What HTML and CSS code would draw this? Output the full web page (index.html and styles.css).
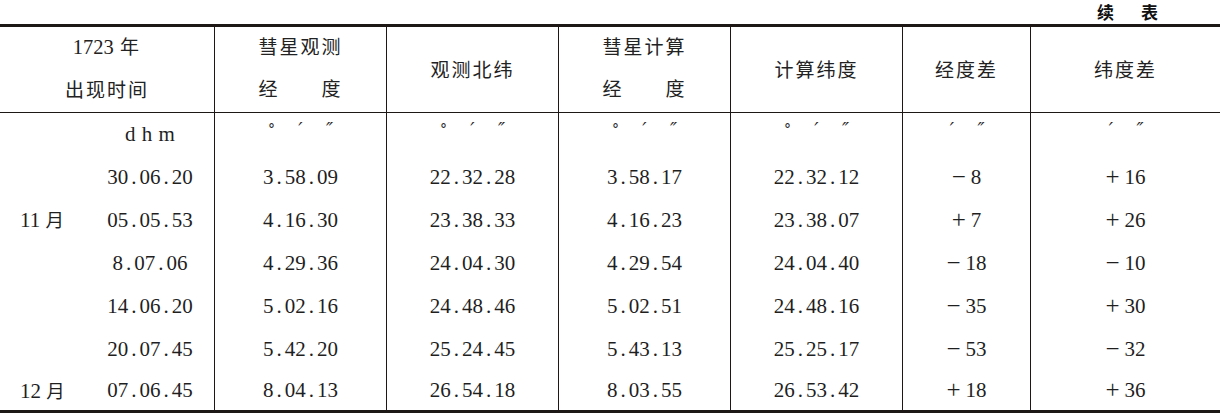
FILE: index.html
```html
<!DOCTYPE html>
<html lang="zh-CN">
<head>
<meta charset="utf-8">
<title>续表</title>
<link rel="stylesheet" href="styles.css">
</head>
<body>
<div class="page">
  <div class="cont"><span>续</span><span>表</span></div>
  <div class="grid">
    <div class="h"><div class="stack"><span><span class="n">1723</span> 年</span><span>出现时间</span></div></div>
    <div class="h"><div class="just"><span>彗星观测</span><span class="sp"><span>经</span><span>度</span></span></div></div>
    <div class="h"><span class="one">观测北纬</span></div>
    <div class="h"><div class="just"><span>彗星计算</span><span class="sp"><span>经</span><span>度</span></span></div></div>
    <div class="h"><span class="one">计算纬度</span></div>
    <div class="h"><span class="one">经度差</span></div>
    <div class="h"><span class="one">纬度差</span></div>

    <div class="c0 ur"><span class="mo"></span><span class="t dhm">d h m</span></div>
    <div class="c ur"><span class="u"><span class="deg">°</span><span>′</span><span>″</span></span></div>
    <div class="c ur"><span class="u"><span class="deg">°</span><span>′</span><span>″</span></span></div>
    <div class="c ur"><span class="u"><span class="deg">°</span><span>′</span><span>″</span></span></div>
    <div class="c ur"><span class="u"><span class="deg">°</span><span>′</span><span>″</span></span></div>
    <div class="c ur"><span class="u"><span>′</span><span>″</span></span></div>
    <div class="c ur"><span class="u"><span>′</span><span>″</span></span></div>

    <div class="c0"><span class="mo"></span><span class="t">30<span class="p">.</span>06<span class="p">.</span>20</span></div>
    <div class="c">3<span class="p">.</span>58<span class="p">.</span>09</div>
    <div class="c">22<span class="p">.</span>32<span class="p">.</span>28</div>
    <div class="c">3<span class="p">.</span>58<span class="p">.</span>17</div>
    <div class="c">22<span class="p">.</span>32<span class="p">.</span>12</div>
    <div class="c"><span class="sg">−</span>8</div>
    <div class="c"><span class="sg">+</span>16</div>

    <div class="c0"><span class="mo">11 <span class="cj">月</span></span><span class="t">05<span class="p">.</span>05<span class="p">.</span>53</span></div>
    <div class="c">4<span class="p">.</span>16<span class="p">.</span>30</div>
    <div class="c">23<span class="p">.</span>38<span class="p">.</span>33</div>
    <div class="c">4<span class="p">.</span>16<span class="p">.</span>23</div>
    <div class="c">23<span class="p">.</span>38<span class="p">.</span>07</div>
    <div class="c"><span class="sg">+</span>7</div>
    <div class="c"><span class="sg">+</span>26</div>

    <div class="c0"><span class="mo"></span><span class="t">8<span class="p">.</span>07<span class="p">.</span>06</span></div>
    <div class="c">4<span class="p">.</span>29<span class="p">.</span>36</div>
    <div class="c">24<span class="p">.</span>04<span class="p">.</span>30</div>
    <div class="c">4<span class="p">.</span>29<span class="p">.</span>54</div>
    <div class="c">24<span class="p">.</span>04<span class="p">.</span>40</div>
    <div class="c"><span class="sg">−</span>18</div>
    <div class="c"><span class="sg">−</span>10</div>

    <div class="c0"><span class="mo"></span><span class="t">14<span class="p">.</span>06<span class="p">.</span>20</span></div>
    <div class="c">5<span class="p">.</span>02<span class="p">.</span>16</div>
    <div class="c">24<span class="p">.</span>48<span class="p">.</span>46</div>
    <div class="c">5<span class="p">.</span>02<span class="p">.</span>51</div>
    <div class="c">24<span class="p">.</span>48<span class="p">.</span>16</div>
    <div class="c"><span class="sg">−</span>35</div>
    <div class="c"><span class="sg">+</span>30</div>

    <div class="c0"><span class="mo"></span><span class="t">20<span class="p">.</span>07<span class="p">.</span>45</span></div>
    <div class="c">5<span class="p">.</span>42<span class="p">.</span>20</div>
    <div class="c">25<span class="p">.</span>24<span class="p">.</span>45</div>
    <div class="c">5<span class="p">.</span>43<span class="p">.</span>13</div>
    <div class="c">25<span class="p">.</span>25<span class="p">.</span>17</div>
    <div class="c"><span class="sg">−</span>53</div>
    <div class="c"><span class="sg">−</span>32</div>

    <div class="c0"><span class="mo">12 <span class="cj">月</span></span><span class="t">07<span class="p">.</span>06<span class="p">.</span>45</span></div>
    <div class="c">8<span class="p">.</span>04<span class="p">.</span>13</div>
    <div class="c">26<span class="p">.</span>54<span class="p">.</span>18</div>
    <div class="c">8<span class="p">.</span>03<span class="p">.</span>55</div>
    <div class="c">26<span class="p">.</span>53<span class="p">.</span>42</div>
    <div class="c"><span class="sg">+</span>18</div>
    <div class="c"><span class="sg">+</span>36</div>
  </div>
</div>
</body>
</html>
```
FILE: styles.css
```css
html, body {
  margin: 0;
  padding: 0;
  background: #ffffff;
}

.page {
  width: 1220px;
  color: #1f1f1f;
  font-family: "Liberation Serif", "Noto Sans CJK SC", serif;
}

.cont {
  height: 24px;
  display: flex;
  justify-content: flex-end;
  align-items: flex-start;
  gap: 27px;
  padding-right: 62px;
  font-family: "Noto Sans CJK SC", sans-serif;
  font-weight: 700;
  font-size: 17px;
  line-height: 24px;
  color: #111;
}

.grid {
  display: grid;
  grid-template-columns: 214px 172px 172px 172px 172px 128px 190px;
  grid-template-rows: 86px 42px repeat(5, 43px) 40px;
  border-top: 3px solid #1d1816;
  border-bottom: 3px solid #1d1816;
  font-size: 21px;
}

.grid > * {
  box-sizing: border-box;
  min-width: 0;
}

.grid > :not(:nth-child(7n+1)) {
  border-left: 1px solid #1d1816;
}

.grid > :nth-child(-n+7) {
  border-bottom: 1px solid #1d1816;
}

/* header */
.h {
  display: flex;
  align-items: center;
  justify-content: center;
  font-family: "Noto Sans CJK SC", sans-serif;
  font-size: 19px;
  letter-spacing: 2px;
  color: #222;
}

.h .n {
  font-family: "Liberation Serif", serif;
  font-size: 20.5px;
  letter-spacing: 0;
}

.stack {
  display: flex;
  flex-direction: column;
  align-items: center;
  line-height: 42px;
  padding-bottom: 5px;
}

.just {
  display: inline-flex;
  flex-direction: column;
  align-items: stretch;
  line-height: 42px;
  padding-bottom: 5px;
}

.sp {
  display: flex;
  justify-content: space-between;
}

.one {
  line-height: 30px;
  padding-bottom: 2px;
}

/* body */
.c {
  display: flex;
  align-items: center;
  justify-content: center;
  line-height: 24px;
  white-space: nowrap;
}

.c0 {
  display: grid;
  grid-template-columns: 86px 1fr;
  align-items: center;
  line-height: 24px;
  white-space: nowrap;
}

.mo {
  padding-left: 20px;
}

.cj {
  font-family: "Noto Sans CJK SC", sans-serif;
  font-size: 18.5px;
}

.t {
  text-align: center;
}

.p {
  padding: 0 3px;
}

.sg {
  font-size: 25px;
  line-height: 20px;
  padding-right: 5px;
}

.dhm {
  word-spacing: 1px;
}

.ur {
  align-items: flex-start;
}

.c0.ur {
  align-items: center;
}

.u {
  display: flex;
  justify-content: center;
  font-family: "DejaVu Sans", sans-serif;
  font-size: 19px;
  font-style: italic;
  line-height: 20px;
  padding-top: 6px;
  color: #2a2a2a;
}

.u > span {
  width: 29px;
  text-align: center;
}

.u > .deg {
  font-family: "DejaVu Serif", serif;
  font-style: normal;
  font-size: 14px;
}
```
